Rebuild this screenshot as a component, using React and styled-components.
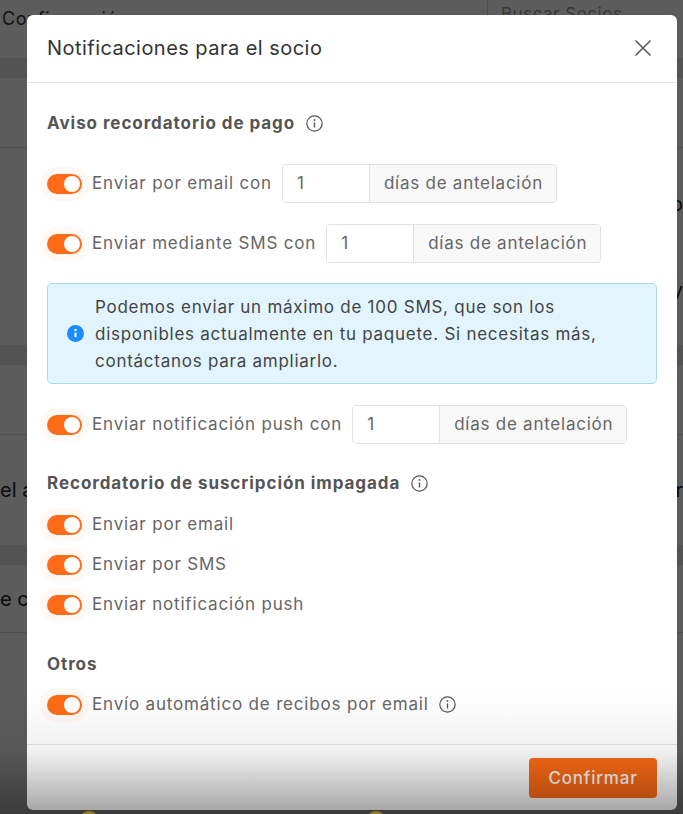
import React from 'react';
import styled, { createGlobalStyle } from 'styled-components';

const FONT = `Inter, "Noto Sans", "Liberation Sans", sans-serif`;

const GlobalStyle = createGlobalStyle`
  html, body {
    margin: 0;
    padding: 0;
    background: #fff;
  }
  * {
    box-sizing: border-box;
  }
`;

const Screen = styled.div`
  position: relative;
  width: 683px;
  height: 814px;
  overflow: hidden;
  font-family: ${FONT};
  background: #fff;
`;

/* page behind the dialog */
const PageTop = styled.div`
  display: flex;
  height: 58px;
`;

const PageTitle = styled.div`
  width: 487px;
  padding: 8px 0 0 2px;
  font-size: 18px;
  letter-spacing: 0.5px;
  color: #333;
`;

const PageSearch = styled.div`
  flex: 1;
  border-left: 1px solid #ccc;
  padding: 4px 0 0 13px;
  font-size: 17px;
  letter-spacing: 0.5px;
  color: #999;
`;

const Band = styled.div`
  height: 20px;
  background: #e6e6e6;
`;

const PageRow = styled.div`
  display: flex;
  justify-content: space-between;
  align-items: center;
  height: ${(p) => p.$h}px;
  border-bottom: ${(p) => (p.$line ? '1px solid #ddd' : 'none')};
  font-size: 20px;
  color: #222;
`;

const Backdrop = styled.div`
  position: absolute;
  inset: 0;
  background: rgba(0, 0, 0, 0.64);
`;

const Coin = styled.div`
  position: absolute;
  top: 811px;
  left: ${(p) => p.$x}px;
  width: 20px;
  height: 20px;
  border-radius: 50%;
  background: #f2b632;
`;

/* dialog */
const Modal = styled.div`
  position: absolute;
  left: 27px;
  top: 15px;
  width: 650px;
  height: 795px;
  display: flex;
  flex-direction: column;
  background: #fff;
  border-radius: 6px;
  overflow: hidden;
`;

const ModalHeader = styled.div`
  display: flex;
  align-items: center;
  justify-content: space-between;
  height: 68px;
  padding: 0 25px 1px 20px;
  border-bottom: 1px solid #e4e4e4;
`;

const ModalTitle = styled.h2`
  margin: 0;
  font-size: 20px;
  font-weight: 400;
  letter-spacing: 0.46px;
  color: #333;
`;

const CloseButton = styled.button`
  display: flex;
  padding: 0;
  border: 0;
  background: none;
  color: #555;
`;

const ModalBody = styled.div`
  flex: 1;
  padding: 0 20px;
  display: flex;
  flex-direction: column;
`;

const SectionTitle = styled.div`
  display: flex;
  align-items: center;
  gap: 11px;
  height: 24px;
  margin-top: ${(p) => p.$top}px;
  margin-bottom: ${(p) => p.$bottom}px;
  font-size: 17px;
  font-weight: 700;
  letter-spacing: 0.93px;
  color: #555;
`;

const Row = styled.div`
  display: flex;
  align-items: center;
  height: 40px;
  margin-bottom: ${(p) => p.$bottom || 0}px;
  font-size: 17px;
  letter-spacing: 0.82px;
  color: #666;
`;

const Toggle = styled.span`
  position: relative;
  flex: none;
  width: 35px;
  height: 20px;
  margin: 2px 10px 0 0;
  border-radius: 10px;
  background: #ff6b16;
  box-shadow: 0 0 0 7px #fff8f4;

  &::after {
    content: '';
    position: absolute;
    top: 2px;
    right: 2px;
    width: 16px;
    height: 16px;
    border-radius: 50%;
    background: #fff;
  }
`;

const InputGroup = styled.div`
  display: flex;
  height: 39px;
  margin-left: 10px;
  border: 1px solid #e0e0e0;
  border-radius: 4px;
  overflow: hidden;
`;

const NumberBox = styled.div`
  display: flex;
  align-items: center;
  width: 86px;
  padding-left: 14px;
  background: #fff;
`;

const Addon = styled.div`
  display: flex;
  align-items: center;
  padding: 0 13px 0 14px;
  border-left: 1px solid #e0e0e0;
  background: #f8f8f8;
  white-space: nowrap;
  letter-spacing: 0.75px;
`;

const Alert = styled.div`
  display: flex;
  align-items: center;
  gap: 11px;
  height: 101px;
  margin-bottom: 20px;
  padding: 0 19px;
  background: #e2f5fe;
  border: 1px solid #a9d9ee;
  border-radius: 5px;
`;

const AlertText = styled.div`
  padding-top: 2px;
  font-size: 17px;
  line-height: 27px;
  letter-spacing: 0.74px;
  color: #444;
  white-space: nowrap;
`;

const InfoWrap = styled.span`
  display: flex;
  margin-left: 10px;
  color: #555;
`;

const ModalFooter = styled.div`
  display: flex;
  justify-content: flex-end;
  align-items: center;
  height: 66px;
  padding: 0 20px 0 0;
  border-top: 1px solid #e4e4e4;
`;

const ConfirmButton = styled.button`
  width: 128px;
  height: 40px;
  border: 0;
  border-radius: 4px;
  background: #ff6b16;
  font-family: ${FONT};
  font-size: 17px;
  font-weight: 500;
  letter-spacing: 0.8px;
  color: #fff;
`;

const BottomShade = styled.div`
  position: absolute;
  left: 0;
  right: 0;
  bottom: 0;
  height: 124px;
  background: linear-gradient(to bottom, rgba(0, 0, 0, 0), rgba(0, 0, 0, 0.06) 50%, rgba(0, 0, 0, 0.36));
  pointer-events: none;
`;

const InfoIcon = () => (
  <svg width="17" height="17" viewBox="0 0 17 17" fill="none" stroke="currentColor" strokeWidth="1.2">
    <circle cx="8.5" cy="8.5" r="7.7" />
    <path d="M8.5 7.5v5" strokeWidth="1.4" />
    <circle cx="8.5" cy="5" r="0.9" fill="currentColor" stroke="none" />
  </svg>
);

const SolidInfoIcon = () => (
  <svg width="17" height="17" viewBox="0 0 17 17" style={{ flex: 'none' }}>
    <circle cx="8.5" cy="8.5" r="8.5" fill="#1a8cff" />
    <path d="M8.5 7.6v4.6" stroke="#fff" strokeWidth="2" />
    <circle cx="8.5" cy="4.9" r="1.2" fill="#fff" />
  </svg>
);

const CloseIcon = () => (
  <svg width="18" height="18" viewBox="0 0 18 18" fill="none" stroke="currentColor" strokeWidth="1.5">
    <path d="M1.5 1.5l15 15M16.5 1.5l-15 15" />
  </svg>
);

const DaysRow = ({ label, bottom }) => (
  <Row $bottom={bottom}>
    <Toggle />
    {label}
    <InputGroup>
      <NumberBox>1</NumberBox>
      <Addon>días de antelación</Addon>
    </InputGroup>
  </Row>
);

function App() {
  return (
    <Screen>
      <GlobalStyle />
      <PageTop>
        <PageTitle>Configuración</PageTitle>
        <PageSearch>Buscar Socios</PageSearch>
      </PageTop>
      <Band />
      <PageRow $h={70} $line />
      <PageRow $h={111}><span /><span>o</span></PageRow>
      <PageRow $h={62}><span /><span>y</span></PageRow>
      <PageRow $h={24} />
      <Band />
      <PageRow $h={70} $line />
      <PageRow $h={110}><span>el a</span><span>r</span></PageRow>
      <Band />
      <PageRow $h={68} $line><span>e c</span></PageRow>

      <Backdrop />
      <Coin $x={79} />
      <Coin $x={366} />

      <Modal>
        <ModalHeader>
          <ModalTitle>Notificaciones para el socio</ModalTitle>
          <CloseButton><CloseIcon /></CloseButton>
        </ModalHeader>
        <ModalBody>
          <SectionTitle $top={28} $bottom={28}>
            Aviso recordatorio de pago
            <InfoIcon />
          </SectionTitle>
          <DaysRow label="Enviar por email con" bottom={20} />
          <DaysRow label="Enviar mediante SMS con" bottom={20} />
          <Alert>
            <SolidInfoIcon />
            <AlertText>
              Podemos enviar un máximo de 100 SMS, que son los
              <br />
              disponibles actualmente en tu paquete. Si necesitas más,
              <br />
              contáctanos para ampliarlo.
            </AlertText>
          </Alert>
          <DaysRow label="Enviar notificación push con" />
          <SectionTitle $top={27} $bottom={9}>
            Recordatorio de suscripción impagada
            <InfoIcon />
          </SectionTitle>
          <Row><Toggle />Enviar por email</Row>
          <Row><Toggle />Enviar por SMS</Row>
          <Row><Toggle />Enviar notificación push</Row>
          <SectionTitle $top={28} $bottom={8}>Otros</SectionTitle>
          <Row>
            <Toggle />
            Envío automático de recibos por email
            <InfoWrap><InfoIcon /></InfoWrap>
          </Row>
        </ModalBody>
        <ModalFooter>
          <ConfirmButton>Confirmar</ConfirmButton>
        </ModalFooter>
      </Modal>
      <BottomShade />
    </Screen>
  );
}

export default App;
